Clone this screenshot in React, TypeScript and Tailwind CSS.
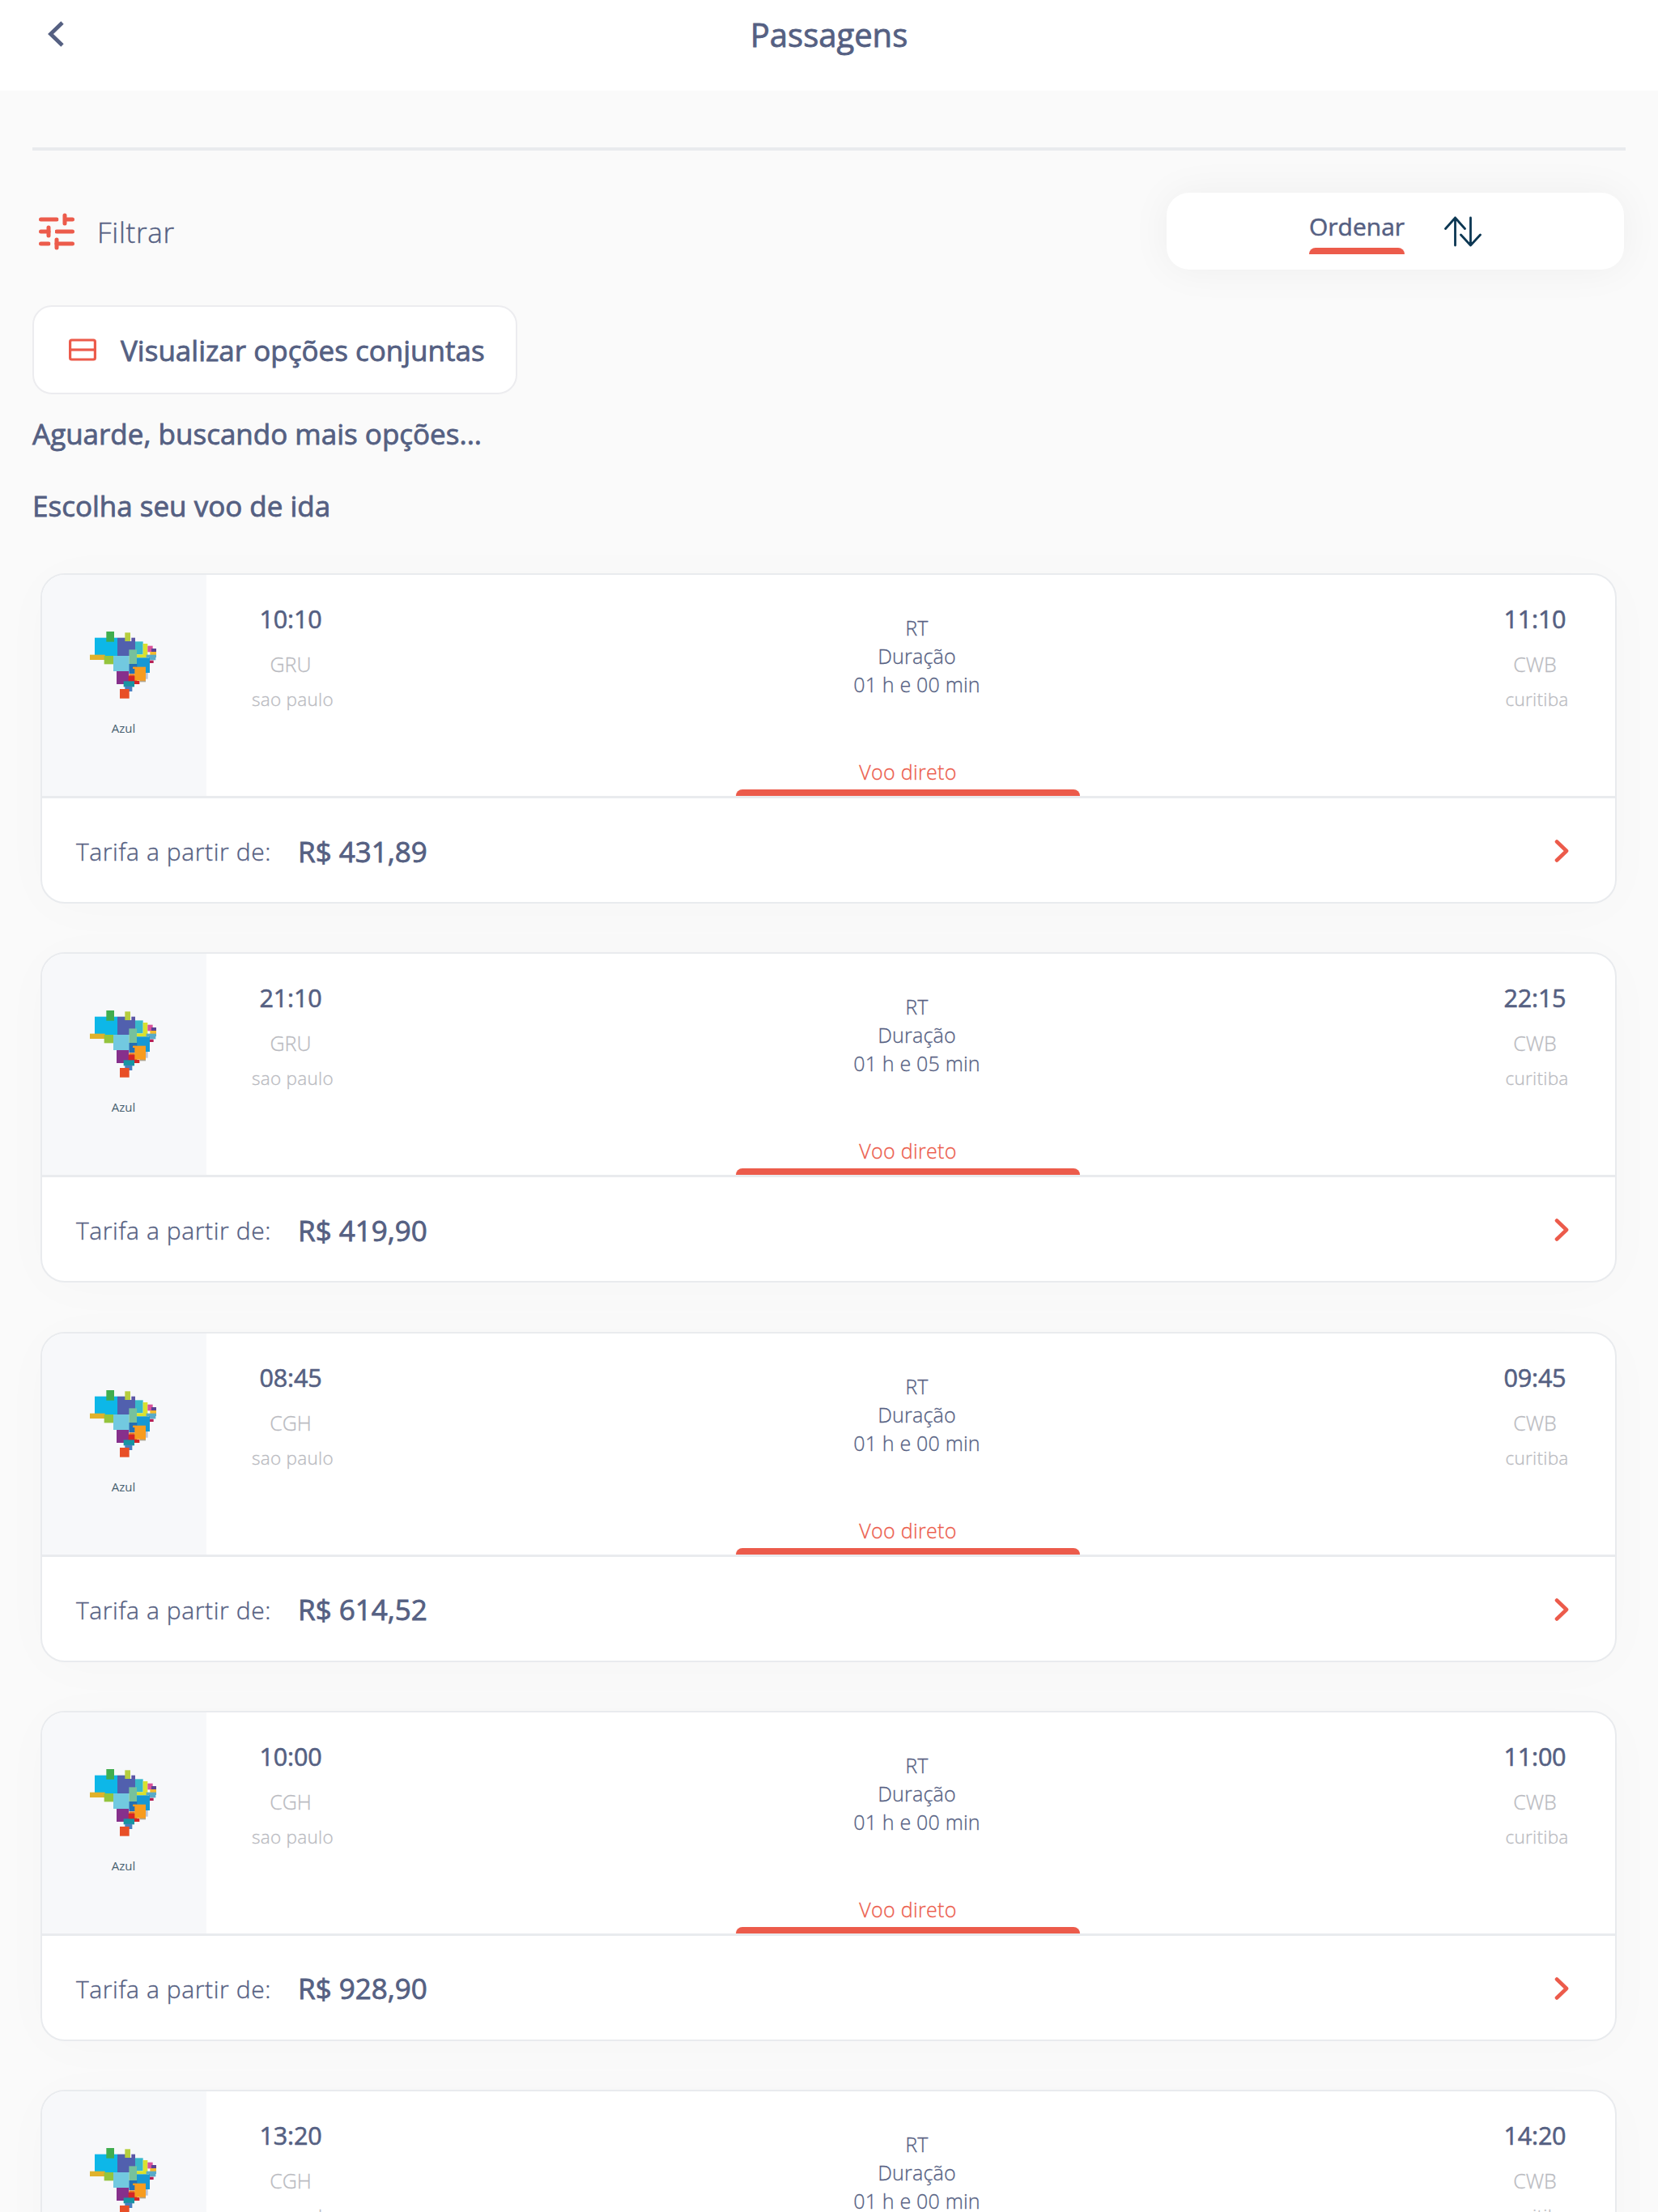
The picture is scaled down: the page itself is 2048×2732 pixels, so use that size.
const flights = [
  { dep: '10:10', from: 'GRU', arr: '11:10', duration: '01 h e 00 min', price: 'R$ 431,89' },
  { dep: '21:10', from: 'GRU', arr: '22:15', duration: '01 h e 05 min', price: 'R$ 419,90' },
  { dep: '08:45', from: 'CGH', arr: '09:45', duration: '01 h e 00 min', price: 'R$ 614,52' },
  { dep: '10:00', from: 'CGH', arr: '11:00', duration: '01 h e 00 min', price: 'R$ 928,90' },
  { dep: '13:20', from: 'CGH', arr: '14:20', duration: '01 h e 00 min', price: 'R$ 928,90' },
];

type Flight = (typeof flights)[number];

// x, y, width, height, fill of each tile in the airline's map logo
const tiles: [number, number, number, number, string][] = [
  [81, 83, 84, 67, '#0db7e8'],
  [124, 60, 29, 38, '#40ad4e'],
  [165, 83, 48, 67, '#5160ae'],
  [213, 96, 18, 54, '#5160ae'],
  [193, 64, 20, 32, '#b6ce3e'],
  [217, 83, 14, 13, '#5b55a5'],
  [231, 97, 29, 48, '#38b9cb'],
  [260, 105, 17, 52, '#d9e12f'],
  [237, 145, 40, 12, '#d9e12f'],
  [277, 113, 19, 23, '#d9529b'],
  [291, 123, 18, 12, '#5b4292'],
  [286, 135, 23, 12, '#f4b92e'],
  [272, 146, 37, 10, '#5aaac8'],
  [282, 156, 25, 10, '#5aaac8'],
  [282, 167, 17, 10, '#b51f55'],
  [63, 146, 56, 19, '#e0b22c'],
  [116, 150, 37, 31, '#94c43d'],
  [150, 150, 58, 57, '#72c9e0'],
  [208, 127, 29, 53, '#76c19d'],
  [237, 157, 48, 56, '#1698d4'],
  [208, 180, 30, 36, '#2170b5'],
  [162, 207, 45, 48, '#86308c'],
  [270, 213, 8, 23, '#b9c4d8'],
  [248, 238, 22, 9, '#b0a58f'],
  [208, 217, 22, 8, '#e57a25'],
  [206, 224, 32, 24, '#d42427'],
  [226, 243, 21, 12, '#d42427'],
  [222, 191, 10, 7, '#f79c1f'],
  [229, 191, 41, 51, '#f79c1f'],
  [188, 244, 40, 21, '#1894a3'],
  [193, 263, 27, 19, '#4a7fc0'],
  [174, 273, 35, 35, '#e84f27'],
];

function AirlineLogo() {
  return (
    <svg viewBox="63 60 249 249" className="h-[83px] w-[83px]">
      {tiles.map(([x, y, w, h, fill], i) => (
        <rect key={i} x={x} y={y} width={w} height={h} fill={fill} />
      ))}
    </svg>
  );
}

function FilterIcon() {
  return (
    <svg viewBox="0 0 44 46" className="h-[46px] w-11" fill="none" stroke="#ec5b4b" strokeWidth="5" strokeLinecap="round">
      <path d="M2.500 8H22M34 8h7.500M2.500 23H12M22 23h19.500M2.500 38H12M22 38h19.500" />
      <path d="M32 3v10M12 18v10M22 33v10" />
      <path d="M26.500 5v6M18 20v6M16.500 35v6" stroke="#fafafa" strokeWidth="4" strokeLinecap="butt" />
    </svg>
  );
}

function Endpoint({ time, code, city }: { time: string; code: string; city: string }) {
  return (
    <div className="flex w-[106px] flex-col items-center whitespace-nowrap">
      <span className="text-[30.5px] leading-[44px] tracking-[-0.2px] [-webkit-text-stroke:0.6px_#556082]">{time}</span>
      <span className="mt-[17px] text-[25px] leading-[35px] font-light text-[#b9bac0] [-webkit-text-stroke:0.3px_#b9bac0]">
        {code}
      </span>
      <span className="mt-[8px] ml-[5px] text-[22.5px] leading-[35px] font-light tracking-[0.3px] text-[#b9bac0] [-webkit-text-stroke:0.3px_#b9bac0]">
        {city}
      </span>
    </div>
  );
}

function FlightCard({ flight }: { flight: Flight }) {
  return (
    <article className="h-[408px] shrink-0 overflow-hidden rounded-[30px] border-2 border-[#e9ebee] bg-white shadow-[0_6px_70px_rgba(0,0,0,0.02)]">
      <div className="flex h-[273px]">
        <div className="flex w-[203px] flex-col items-center bg-[#f7f8fa] pt-[70px] pr-[2px]">
          <AirlineLogo />
          <span className="mt-[25px] text-[15px] leading-[22px] text-[#47606f]">Azul</span>
        </div>
        <div className="flex flex-1 flex-col">
          <div className="flex justify-between pt-[32px] pr-[46px] pl-[51px]">
            <Endpoint time={flight.dep} code={flight.from} city="sao paulo" />
            <div className="ml-[10px] flex flex-col items-center pt-4 text-[25px] leading-[35px] font-light tracking-[0.2px] [-webkit-text-stroke:0.3px_#556082]">
              <span>RT</span>
              <span>Duração</span>
              <span>{flight.duration}</span>
            </div>
            <Endpoint time={flight.arr} code="CWB" city="curitiba" />
          </div>
          <div className="mt-auto ml-[654px] flex w-[425px] flex-col items-center">
            <span className="text-[25px] leading-[35px] font-light tracking-[0.3px] text-[#ec5b4b] [-webkit-text-stroke:0.3px_#ec5b4b]">
              Voo direto
            </span>
            <div className="mt-1 h-2 w-full rounded-t-lg bg-[#ec5b4b]" />
          </div>
        </div>
      </div>
      <div className="flex h-[131px] items-center border-t-[3px] border-[#e9ebee] pt-[3px] pr-[57px] pl-[42px]">
        <span className="pt-px text-[30px] leading-[40px] font-light tracking-[0.6px] [-webkit-text-stroke:0.35px_#556082]">
          Tarifa a partir de:
        </span>
        <span className="ml-[33px] text-[35px] leading-[48px] [-webkit-text-stroke:0.8px_#556082]">{flight.price}</span>
        <svg viewBox="0 0 18 30" className="-mt-px ml-auto h-[30px] w-[18px]" fill="none" stroke="#ec5b4b" strokeWidth="4.6" strokeLinecap="round" strokeLinejoin="round">
          <path d="M3 3.5 15 15 3 26.5" />
        </svg>
      </div>
    </article>
  );
}

export default function App() {
  return (
    <div className="h-[2732px] w-[2048px] overflow-hidden bg-[#fafafa] font-['Open_Sans',sans-serif] text-[#556082]">
      <header className="grid h-[112px] grid-cols-[1fr_auto_1fr] items-start bg-white">
        <svg viewBox="0 0 20 32" className="mt-[26px] ml-[59px] h-8 w-5" fill="none" stroke="#556082" strokeWidth="4.8">
          <path d="M18 2 3.5 16 18 30" />
        </svg>
        <h1 className="text-[40px] leading-[86px] [-webkit-text-stroke:0.8px_#556082]">Passagens</h1>
      </header>

      <main className="px-10">
        <div className="mt-[70px] h-1 bg-[#e9ebee]" />

        <div className="mt-[52px] flex h-[95px] items-center justify-between">
          <button className="flex items-center gap-[28px] pl-2">
            <FilterIcon />
            <span className="pt-[2px] text-[35px] leading-[48px] font-light tracking-[0.7px] [-webkit-text-stroke:0.4px_#556082]">
              Filtrar
            </span>
          </button>
          <button className="mr-[2px] flex h-[95px] w-[565px] justify-center gap-[49px] rounded-[28px] bg-white shadow-[0_0_50px_rgba(0,0,0,0.05)]">
            <span className="flex flex-col pt-[20px]">
              <span className="text-[30px] leading-[43px] [-webkit-text-stroke:0.5px_#556082]">Ordenar</span>
              <span className="mt-[5px] h-2 w-full rounded-t-lg bg-[#ec5b4b]" />
            </span>
            <svg viewBox="0 0 46 38" className="mt-[29px] h-[38px] w-[46px]" fill="none" stroke="#0c3753" strokeWidth="2.8" strokeLinecap="round" strokeLinejoin="round">
              <path d="M13.5 36V2M1.500 15.500 13.500 2 25.500 15.500" />
              <path d="M32.500 2v34M20.500 23 32.500 36 44.500 23" />
            </svg>
          </button>
        </div>

        <button className="mt-11 flex h-[110px] w-[599px] items-center rounded-[24px] border-2 border-[#ececef] bg-white pl-[43px]">
          <svg viewBox="0 0 34 28" className="h-7 w-[34px]" fill="none" stroke="#ec5b4b" strokeWidth="3.2">
            <rect x="1.600" y="2" width="30.800" height="24" rx="2" />
            <path d="M1.600 14h30.800" />
          </svg>
          <span className="ml-[30px] pt-px text-[35px] leading-[48px] whitespace-nowrap [-webkit-text-stroke:0.8px_#556082]">
            Visualizar opções conjuntas
          </span>
        </button>

        <p className="mt-[25px] text-[35px] leading-[48px] [-webkit-text-stroke:0.8px_#556082]">Aguarde, buscando mais opções...</p>
        <h2 className="mt-[41px] text-[35px] leading-[48px] [-webkit-text-stroke:0.8px_#556082]">Escolha seu voo de ida</h2>

        <section className="mt-[59px] flex flex-col gap-[60.25px] pr-[11px] pl-[10px]">
          {flights.map((flight, i) => (
            <FlightCard key={i} flight={flight} />
          ))}
        </section>
      </main>
    </div>
  );
}
